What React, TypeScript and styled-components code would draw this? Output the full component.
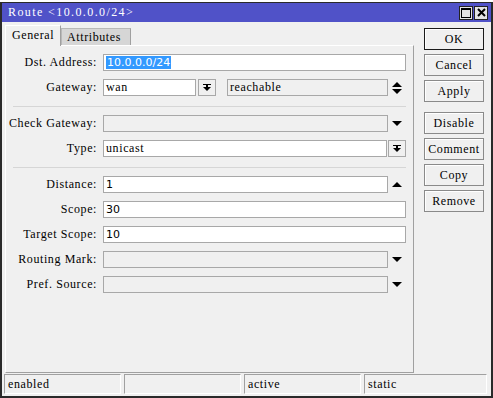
import React from "react";
import styled, { createGlobalStyle } from "styled-components";

const Global = createGlobalStyle`
  html, body { margin: 0; padding: 0; background: #fff; }
  body { font-family: "Liberation Serif", "DejaVu Serif", serif; }
  * { box-sizing: border-box; }
`;

const SERIF = `"Liberation Serif", "DejaVu Serif", serif`;
const SANS = `"DejaVu Sans", "Liberation Sans", sans-serif`;

const Page = styled.div`
  width: 493px;
  height: 398px;
  padding-top: 2px;
  background: #fff;
  display: flex;
`;

const Window = styled.div`
  flex: 1;
  display: flex;
  flex-direction: column;
  border: 2px solid #2a2a2a;
  border-top-width: 1px;
  background: #f0f0f0;
  font-family: ${SERIF};
  font-size: 12px;
  letter-spacing: 0.6px;
  color: #000;
`;

const TitleBar = styled.div`
  height: 19px;
  background: #5052c8;
  color: #fff;
  display: flex;
  align-items: center;
  padding: 0 3px 0 6px;
`;

const TitleText = styled.div`
  flex: 1;
  letter-spacing: 1.4px;
`;

const TitleButtons = styled.div`
  display: flex;
  gap: 1px;
`;

const TitleBtn = styled.div`
  width: 14px;
  height: 14px;
  background: #e4e4e4;
  border: 1px solid #222;
  display: flex;
  align-items: center;
  justify-content: center;
`;

const Body = styled.div`
  flex: 1;
  display: flex;
  min-height: 0;
`;

const Main = styled.div`
  width: 412px;
  display: flex;
  flex-direction: column;
  padding: 3px 0 0 3px;
`;

const Tabs = styled.div`
  height: 20px;
  display: flex;
  align-items: flex-end;
`;

const Tab = styled.div<{ $active?: boolean; $w: number }>`
  position: relative;
  z-index: ${(p) => (p.$active ? 2 : 1)};
  width: ${(p) => p.$w}px;
  height: ${(p) => (p.$active ? "21px" : "17px")};
  margin-bottom: ${(p) => (p.$active ? "-1px" : "0")};
  padding: ${(p) => (p.$active ? "2px 0 0 6px" : "0 0 0 5px")};
  display: flex;
  align-items: ${(p) => (p.$active ? "flex-start" : "center")};
  background: ${(p) => (p.$active ? "#f0f0f0" : "#d6d6d6")};
  border: 1px solid ${(p) => (p.$active ? "#fff" : "#b8b8b8")};
  border-right-color: #a0a0a0;
  border-bottom: none;
`;

const Panel = styled.div`
  flex: 1;
  border: 1px solid #fff;
  border-right-color: #a0a0a0;
  border-bottom-color: #a0a0a0;
  padding: 8px 7px 0 0;
  display: flex;
  flex-direction: column;
  gap: 8px;
`;

const Row = styled.div`
  display: grid;
  grid-template-columns: 91px 1fr;
  column-gap: 6px;
  height: 17px;
  align-items: center;
`;

const Label = styled.div`
  text-align: right;
  white-space: nowrap;
`;

const Fields = styled.div`
  display: flex;
  align-items: center;
  height: 17px;
`;

const Input = styled.div<{ $disabled?: boolean; $sans?: boolean; $w?: number }>`
  height: 17px;
  ${(p) => (p.$w ? `width: ${p.$w}px; flex: none;` : "flex: 1;")}
  min-width: 0;
  background: ${(p) => (p.$disabled ? "#f0f0f0" : "#fff")};
  border: 1px solid #a8a8a8;
  padding-left: 2px;
  display: flex;
  align-items: center;
  white-space: nowrap;
  overflow: hidden;
  font-family: ${(p) => (p.$sans ? SANS : SERIF)};
  font-size: ${(p) => (p.$sans ? "11px" : "12px")};
  letter-spacing: ${(p) => (p.$sans ? "0" : "0.6px")};
`;

const Selected = styled.span`
  background: #3399ff;
  color: #fff;
  padding: 0 1px;
  line-height: 13px;
`;

const IconSlot = styled.div`
  width: 18px;
  flex: none;
  display: flex;
  align-items: center;
  justify-content: center;
`;

const SmallBtn = styled.div<{ $ml?: number }>`
  width: 18px;
  height: 17px;
  flex: none;
  margin-left: ${(p) => p.$ml ?? 2}px;
  border: 1px solid #a8a8a8;
  background: #f0f0f0;
  display: flex;
  align-items: center;
  justify-content: center;
`;

const Spacer = styled.div<{ $w: number }>`
  width: ${(p) => p.$w}px;
  flex: none;
`;

const Separator = styled.div`
  height: 1px;
  background: #d6d6d6;
  margin: 2px 0 0 7px;
`;

const Side = styled.div`
  width: 60px;
  margin-left: 10px;
  padding-top: 6px;
  display: flex;
  flex-direction: column;
  gap: 4px;
`;

const Btn = styled.div<{ $default?: boolean; $mt?: number }>`
  height: 22px;
  margin-top: ${(p) => p.$mt ?? 0}px;
  border: 1px solid ${(p) => (p.$default ? "#1a1a1a" : "#8a8a8a")};
  box-shadow: inset 1px 1px 0 #fff;
  background: #f0f0f0;
  display: flex;
  align-items: center;
  justify-content: center;
`;

const StatusBar = styled.div`
  display: flex;
  gap: 3px;
  padding: 1px 2px 1px 2px;
  height: 23px;
`;

const Cell = styled.div<{ $w: number }>`
  width: ${(p) => p.$w}px;
  height: 20px;
  border: 1px solid #fff;
  border-top-color: #a0a0a0;
  border-left-color: #a0a0a0;
  padding-left: 3px;
  display: flex;
  align-items: center;
`;

const Down = () => (
  <svg width="10" height="6" viewBox="0 0 10 6">
    <polygon points="0,0 10,0 5,5" fill="#000" />
  </svg>
);

const Up = () => (
  <svg width="10" height="6" viewBox="0 0 10 6">
    <polygon points="0,5 10,5 5,0" fill="#000" />
  </svg>
);

const UpDown = () => (
  <svg width="10" height="12" viewBox="0 0 10 12">
    <polygon points="0,5 10,5 5,0" fill="#000" />
    <polygon points="0,7 10,7 5,12" fill="#000" />
  </svg>
);

const BarDown = () => (
  <svg width="8" height="8" viewBox="0 0 8 8">
    <rect x="0" y="0" width="8" height="1" fill="#000" />
    <polygon points="0,3 8,3 4,7" fill="#000" />
    <rect x="3" y="1" width="2" height="2" fill="#000" />
  </svg>
);

const MaxIcon = () => (
  <svg width="10" height="10" viewBox="0 0 10 10">
    <rect x="0.5" y="0.5" width="9" height="9" fill="none" stroke="#000" />
    <rect x="0" y="0" width="10" height="2" fill="#000" />
  </svg>
);

const CloseIcon = () => (
  <svg width="9" height="9" viewBox="0 0 9 9">
    <path d="M1 1 L8 8 M8 1 L1 8" stroke="#000" strokeWidth="2" />
  </svg>
);

export default function App() {
  return (
    <>
      <Global />
      <Page>
        <Window>
          <TitleBar>
            <TitleText>Route &lt;10.0.0.0/24&gt;</TitleText>
            <TitleButtons>
              <TitleBtn>
                <MaxIcon />
              </TitleBtn>
              <TitleBtn>
                <CloseIcon />
              </TitleBtn>
            </TitleButtons>
          </TitleBar>
          <Body>
            <Main>
              <Tabs>
                <Tab $active $w={56}>General</Tab>
                <Tab $w={70}>Attributes</Tab>
              </Tabs>
              <Panel>
                <Row>
                  <Label>Dst. Address:</Label>
                  <Fields>
                    <Input $sans>
                      <Selected>10.0.0.0/24</Selected>
                    </Input>
                  </Fields>
                </Row>
                <Row>
                  <Label>Gateway:</Label>
                  <Fields>
                    <Input $w={93}>wan</Input>
                    <SmallBtn>
                      <BarDown />
                    </SmallBtn>
                    <Spacer $w={11} />
                    <Input $disabled>reachable</Input>
                    <IconSlot>
                      <UpDown />
                    </IconSlot>
                  </Fields>
                </Row>
                <Separator />
                <Row>
                  <Label>Check Gateway:</Label>
                  <Fields>
                    <Input $disabled />
                    <IconSlot>
                      <Down />
                    </IconSlot>
                  </Fields>
                </Row>
                <Row>
                  <Label>Type:</Label>
                  <Fields>
                    <Input>unicast</Input>
                    <SmallBtn $ml={1}>
                      <BarDown />
                    </SmallBtn>
                  </Fields>
                </Row>
                <Separator />
                <Row>
                  <Label>Distance:</Label>
                  <Fields>
                    <Input $sans>1</Input>
                    <IconSlot>
                      <Up />
                    </IconSlot>
                  </Fields>
                </Row>
                <Row>
                  <Label>Scope:</Label>
                  <Fields>
                    <Input $sans>30</Input>
                  </Fields>
                </Row>
                <Row>
                  <Label>Target Scope:</Label>
                  <Fields>
                    <Input $sans>10</Input>
                  </Fields>
                </Row>
                <Row>
                  <Label>Routing Mark:</Label>
                  <Fields>
                    <Input $disabled />
                    <IconSlot>
                      <Down />
                    </IconSlot>
                  </Fields>
                </Row>
                <Row>
                  <Label>Pref. Source:</Label>
                  <Fields>
                    <Input $disabled />
                    <IconSlot>
                      <Down />
                    </IconSlot>
                  </Fields>
                </Row>
              </Panel>
            </Main>
            <Side>
              <Btn $default>OK</Btn>
              <Btn>Cancel</Btn>
              <Btn>Apply</Btn>
              <Btn $mt={6}>Disable</Btn>
              <Btn>Comment</Btn>
              <Btn>Copy</Btn>
              <Btn>Remove</Btn>
            </Side>
          </Body>
          <StatusBar>
            <Cell $w={117}>enabled</Cell>
            <Cell $w={117} />
            <Cell $w={117}>active</Cell>
            <Cell $w={123}>static</Cell>
          </StatusBar>
        </Window>
      </Page>
    </>
  );
}
